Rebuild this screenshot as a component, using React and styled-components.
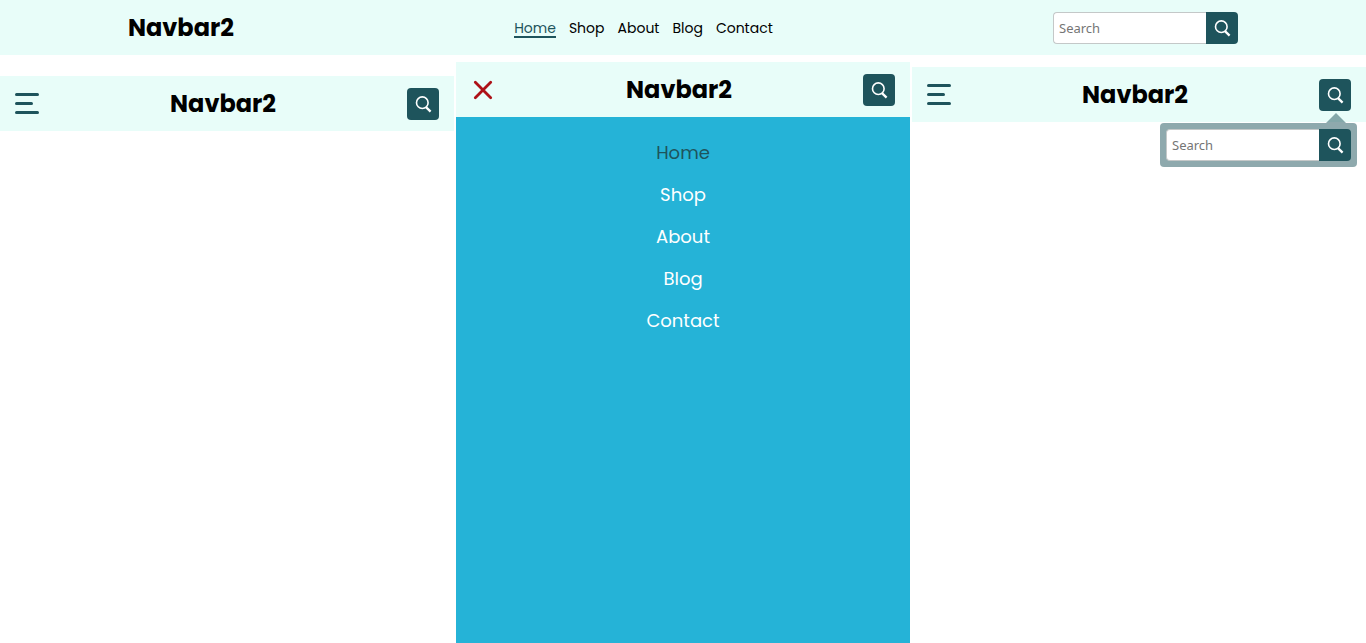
import React from 'react';
import styled, { createGlobalStyle } from 'styled-components';

const mint = '#e8fdf9';
const teal = '#1e545c';

const GlobalStyle = createGlobalStyle`
  *, *::before, *::after { box-sizing: border-box; }
  body {
    margin: 0;
    background: #fff;
    color: #000;
    font-family: Poppins, Inter, "Open Sans", sans-serif;
  }
`;

const Page = styled.div`
  min-height: 100vh;
  display: flex;
  flex-direction: column;
`;

const DesktopBar = styled.header`
  background: ${mint};
  padding: 12px 128px 11px;
  display: flex;
  justify-content: space-between;
  align-items: center;
`;

const MobileBar = styled.header`
  background: ${mint};
  padding: 12px 15px 11px;
  display: flex;
  justify-content: space-between;
  align-items: center;
`;

const Logo = styled.span`
  font-size: 24px;
  line-height: 32px;
  font-weight: 700;
`;

const NavList = styled.nav`
  display: flex;
  gap: 13px;
`;

const NavLink = styled.a`
  padding-top: 2px;
  font-size: 14px;
  line-height: 16px;
  text-decoration: none;
  color: ${({ $active }) => ($active ? teal : '#000')};
  border-bottom: 2px solid ${({ $active }) => ($active ? teal : 'transparent')};
`;

const SearchForm = styled.form`
  display: flex;
  margin: 0;
`;

const SearchInput = styled.input`
  width: 153px;
  height: 32px;
  padding: 0 5px;
  border: 1px solid #c4c8c8;
  border-right: 0;
  border-radius: 4px 0 0 4px;
  background: #fff;
  outline: none;
  font-family: "Noto Sans", "Open Sans", sans-serif;
  font-size: 13px;
  &::placeholder { color: #757575; opacity: 1; }
`;

const SearchButton = styled.button`
  width: 32px;
  height: 32px;
  padding: 0;
  border: 0;
  border-radius: ${({ $attached }) => ($attached ? '0 4px 4px 0' : '4px')};
  background: ${teal};
  color: #fff;
  display: flex;
  align-items: center;
  justify-content: center;
  cursor: pointer;
`;

const ToggleButton = styled.button`
  width: 24px;
  height: 24px;
  padding: 0;
  border: 0;
  background: none;
  color: ${({ $close }) => ($close ? '#ad1117' : teal)};
  cursor: pointer;
  svg { display: block; }
`;

const Panels = styled.main`
  flex: 1;
  display: grid;
  grid-template-columns: repeat(3, minmax(0, 1fr));
  column-gap: 2px;
`;

const Panel = styled.section`
  position: relative;
  display: flex;
  flex-direction: column;
  padding-top: ${({ $top }) => $top}px;
`;

const Menu = styled.nav`
  flex: 1;
  display: flex;
  flex-direction: column;
  align-items: center;
  gap: 15px;
  padding: 22px 0;
  background: #25b3d7;
`;

const MenuLink = styled.a`
  font-size: 18px;
  line-height: 27px;
  text-decoration: none;
  color: ${({ $active }) => ($active ? teal : '#fff')};
`;

const SearchAnchor = styled.div`
  position: relative;
`;

const Popover = styled.div`
  position: absolute;
  top: 44px;
  right: -6px;
  padding: 6px;
  border-radius: 4px;
  background: rgba(30, 84, 92, 0.5);
  &::before {
    content: '';
    position: absolute;
    top: -10px;
    right: 11px;
    border: solid transparent;
    border-width: 0 10px 10px;
    border-bottom-color: rgba(30, 84, 92, 0.5);
  }
`;

const SearchIcon = () => (
  <svg width="18" height="18" viewBox="0 0 18 18" fill="none" stroke="currentColor" aria-hidden="true">
    <circle cx="8.3" cy="7.7" r="5.8" strokeWidth="1.6" />
    <path d="M12 12.1 L16.6 16.6" strokeWidth="2.3" />
  </svg>
);

const BurgerIcon = () => (
  <svg width="24" height="24" viewBox="0 0 24 24" fill="currentColor" aria-hidden="true">
    <rect x="0" y="1" width="24" height="3" rx="1.5" />
    <rect x="0" y="10" width="18" height="3" rx="1.5" />
    <rect x="0" y="19" width="24" height="3" rx="1.5" />
  </svg>
);

const CloseIcon = () => (
  <svg width="24" height="24" viewBox="0 0 24 24" fill="none" stroke="currentColor" strokeWidth="2.8" strokeLinecap="round" aria-hidden="true">
    <path d="M4.3 4.3 L19.7 19.7 M19.7 4.3 L4.3 19.7" />
  </svg>
);

const links = ['Home', 'Shop', 'About', 'Blog', 'Contact'];

const stay = (event) => event.preventDefault();

const SearchBox = () => (
  <SearchForm role="search" onSubmit={stay}>
    <SearchInput type="search" placeholder="Search" aria-label="Search" />
    <SearchButton type="submit" $attached aria-label="Submit search">
      <SearchIcon />
    </SearchButton>
  </SearchForm>
);

const MobileNavbar = ({ menuOpen = false, searchOpen = false }) => (
  <MobileBar>
    <ToggleButton type="button" $close={menuOpen} aria-expanded={menuOpen} aria-label={menuOpen ? 'Close menu' : 'Open menu'}>
      {menuOpen ? <CloseIcon /> : <BurgerIcon />}
    </ToggleButton>
    <Logo>Navbar2</Logo>
    <SearchAnchor>
      <SearchButton type="button" aria-expanded={searchOpen} aria-label="Toggle search">
        <SearchIcon />
      </SearchButton>
      {searchOpen && (
        <Popover>
          <SearchBox />
        </Popover>
      )}
    </SearchAnchor>
  </MobileBar>
);

export default function App() {
  return (
    <>
      <GlobalStyle />
      <Page>
        <DesktopBar>
          <Logo>Navbar2</Logo>
          <NavList aria-label="Main">
            {links.map((name) => (
              <NavLink key={name} href={`#${name.toLowerCase()}`} $active={name === 'Home'}>{name}</NavLink>
            ))}
          </NavList>
          <SearchBox />
        </DesktopBar>
        <Panels>
          <Panel $top={21}>
            <MobileNavbar />
          </Panel>
          <Panel $top={7}>
            <MobileNavbar menuOpen />
            <Menu aria-label="Mobile">
              {links.map((name) => (
                <MenuLink key={name} href={`#${name.toLowerCase()}`} $active={name === 'Home'}>{name}</MenuLink>
              ))}
            </Menu>
          </Panel>
          <Panel $top={12}>
            <MobileNavbar searchOpen />
          </Panel>
        </Panels>
      </Page>
    </>
  );
}
